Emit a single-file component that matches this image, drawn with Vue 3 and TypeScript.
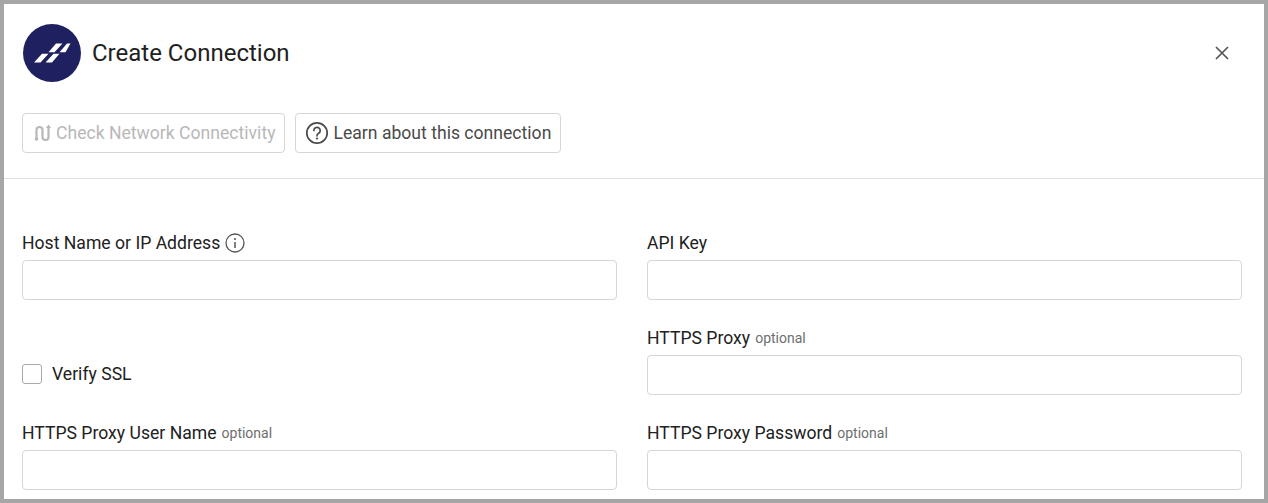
<script setup lang="ts">
interface Field {
  label: string;
  optional?: boolean;
  info?: boolean;
  checkbox?: boolean;
}

const fields: Field[] = [
  { label: "Host Name or IP Address", info: true },
  { label: "API Key" },
  { label: "Verify SSL", checkbox: true },
  { label: "HTTPS Proxy", optional: true },
  { label: "HTTPS Proxy User Name", optional: true },
  { label: "HTTPS Proxy Password", optional: true },
];
</script>

<template>
  <div class="frame">
    <header class="head">
      <div class="title-wrap">
        <svg class="logo" viewBox="0 0 58 58" width="58" height="58" aria-hidden="true">
          <circle cx="29" cy="29" r="29" fill="#1e2060" />
          <path d="M11 38.500 L19 29.800 H25.500 L17.500 38.500 Z M22.500 38.500 L30.500 29.800 H36.500 L29 38.500 Z M25.500 28.200 L33 19.500 H39.500 L31.500 28.200 Z M36.500 28.200 L44 19.500 H47.500 L42.500 28.200 Z" fill="#fff" />
        </svg>
        <h1 class="title">Create Connection</h1>
      </div>
      <button class="close" type="button" aria-label="Close">
        <svg viewBox="0 0 14 14" width="14" height="14">
          <path d="M1 1 L13 13 M13 1 L1 13" stroke="#555" stroke-width="1.700" fill="none" />
        </svg>
      </button>
    </header>

    <div class="actions">
      <button class="btn disabled" type="button">
        <svg class="btn-icon" viewBox="0 0 20 20" width="20" height="20" fill="none" stroke="#b8b8b8" stroke-width="2.200" stroke-linecap="round">
          <path d="M4.500 15 V7 a3 3 0 0 1 6 0 V14 a3 3 0 0 0 6 0 V5" />
          <circle cx="4.500" cy="16" r="1.800" fill="#b8b8b8" stroke="none" />
          <path d="M16.500 1.500 L19 5 H14 Z" fill="#b8b8b8" stroke="none" />
        </svg>
        Check Network Connectivity
      </button>
      <button class="btn" type="button">
        <svg class="btn-icon" viewBox="0 0 24 24" width="24" height="24" fill="none" stroke="#4a4a4a" stroke-width="1.700">
          <circle cx="12" cy="12" r="10.200" />
          <path d="M8.800 9.500 a3.200 3.200 0 1 1 4.800 2.800 c-1 .6 -1.600 1.200 -1.600 2.500" stroke-linecap="round" />
          <circle cx="12" cy="17.500" r="1.100" fill="#4a4a4a" stroke="none" />
        </svg>
        Learn about this connection
      </button>
    </div>

    <div class="form">
      <div v-for="f in fields" :key="f.label" class="field" :class="{ 'field-check': f.checkbox }">
        <template v-if="f.checkbox">
          <label class="check">
            <span class="box"></span>
            <span class="check-label">{{ f.label }}</span>
          </label>
        </template>
        <template v-else>
          <div class="label">
            <span>{{ f.label }}</span>
            <span v-if="f.optional" class="optional">optional</span>
            <svg v-if="f.info" class="info" viewBox="0 0 20 20" width="20" height="20" fill="none" stroke="#555" stroke-width="1.300">
              <circle cx="10" cy="10" r="9" />
              <path d="M10 9 V15" stroke-width="1.500" />
              <circle cx="10" cy="6" r="1" fill="#555" stroke="none" />
            </svg>
          </div>
          <input class="input" type="text" :aria-label="f.label" />
        </template>
      </div>
    </div>
  </div>
</template>

<style>
html,
body {
  margin: 0;
  background: #fff;
}
</style>

<style scoped>
.frame {
  box-sizing: border-box;
  width: 1268px;
  height: 503px;
  border: 4px solid #a6a6a6;
  background: #fff;
  overflow: hidden;
  font-family: Roboto, "Liberation Sans", sans-serif;
  color: #212121;
}
.head {
  display: flex;
  align-items: center;
  justify-content: space-between;
  padding: 20px 35px 0 19px;
}
.title-wrap {
  display: flex;
  align-items: center;
  gap: 11px;
}
.logo {
  display: block;
}
.title {
  margin: 0;
  font-size: 24px;
  font-weight: 400;
  line-height: 58px;
}
.close {
  display: flex;
  padding: 0;
  border: 0;
  background: none;
}
.actions {
  display: flex;
  gap: 10px;
  padding: 31px 18px 25px;
  border-bottom: 1px solid #e0e0e0;
}
.btn {
  box-sizing: border-box;
  display: flex;
  align-items: center;
  gap: 4px;
  height: 40px;
  padding: 0 9px;
  border: 1px solid #d6d6d6;
  border-radius: 4px;
  background: #fff;
  font: 400 17.600px Roboto, sans-serif;
  color: #4a4a4a;
}
.btn.disabled {
  color: #b8b8b8;
}
.form {
  display: grid;
  grid-template-columns: 595px 595px;
  column-gap: 30px;
  grid-auto-rows: 95px;
  padding: 52px 18px 0;
}
.field {
  display: flex;
  flex-direction: column;
}
.field-check {
  justify-content: center;
}
.label {
  display: flex;
  align-items: center;
  gap: 5px;
  height: 24px;
  margin-bottom: 5px;
  font-size: 17.600px;
}
.optional {
  font-size: 14px;
  color: #6e6e6e;
}
.input {
  box-sizing: border-box;
  height: 40px;
  width: 100%;
  padding: 0 10px;
  border: 1px solid #d6d6d6;
  border-radius: 4px;
  outline: none;
  background: #fff;
}
.check {
  display: flex;
  align-items: center;
  gap: 10px;
  font-size: 17.600px;
}
.box {
  box-sizing: border-box;
  width: 20px;
  height: 20px;
  border: 1px solid #a8a8a8;
  border-radius: 3px;
}
</style>
